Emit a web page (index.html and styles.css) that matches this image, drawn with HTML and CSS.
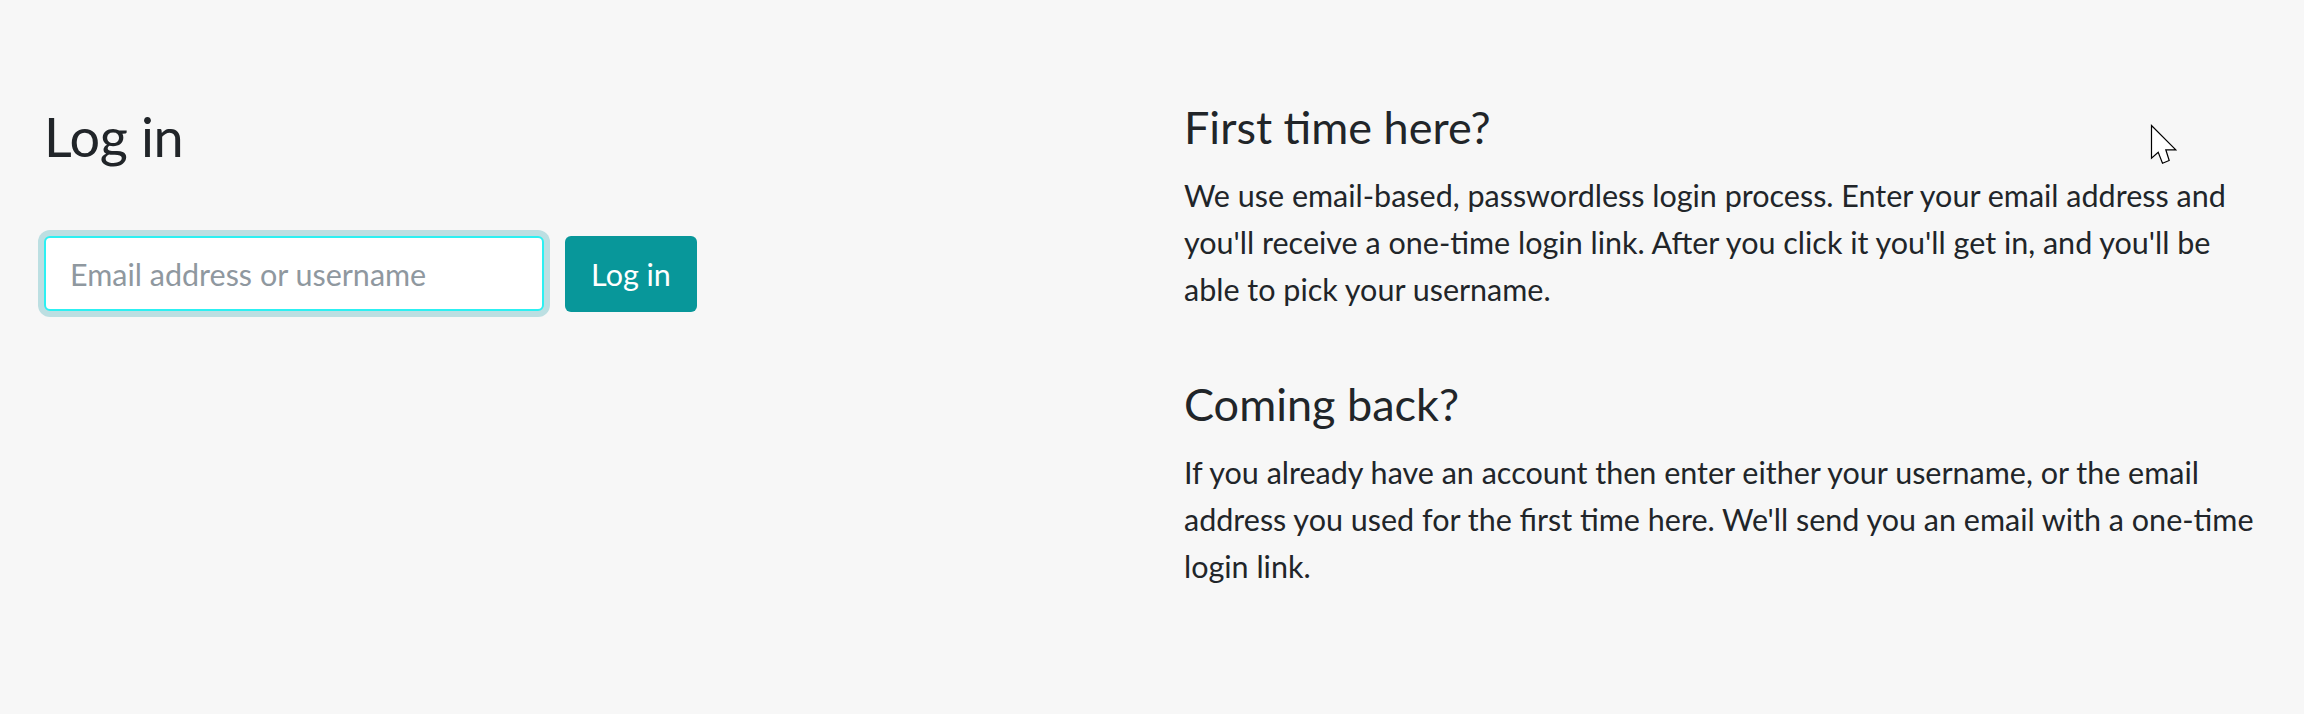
FILE: index.html
```html
<!DOCTYPE html>
<html lang="en">
<head>
<meta charset="utf-8">
<title>Log in</title>
<link rel="stylesheet" href="styles.css">
</head>
<body>
<main class="page">
  <section class="login">
    <h1 class="login-title">Log in</h1>
    <form class="login-form">
      <input class="login-input" type="text" placeholder="Email address or username">
      <button class="login-button" type="button">Log in</button>
    </form>
  </section>
  <section class="info">
    <h2 class="info-title">First time here?</h2>
    <p class="info-text">We use email-based, passwordless login process. Enter your email address and you'll receive a one-time login link. After you click it you'll get in, and you'll be able to pick your username.</p>
    <h2 class="info-title info-title-next">Coming back?</h2>
    <p class="info-text">If you already have an account then enter either your username, or the email address you used for the first time here. We'll send you an email with a one-time login link.</p>
  </section>
</main>
<svg class="cursor" width="28" height="42" viewBox="0 0 28 42" aria-hidden="true">
  <path d="M1.5 1.5 L1.5 34.2 L8.2 28.2 L12.5 39.2 L19.2 36.5 L15.8 25.8 L25.8 25.8 Z" fill="#ffffff" stroke="#000000" stroke-width="1.2" stroke-linejoin="miter"/>
</svg>
</body>
</html>
```
FILE: styles.css
```css
html, body {
  margin: 0;
  padding: 0;
}

body {
  background: #f7f7f7;
  color: #212529;
  font-family: "Lato", "Source Sans Pro", "Noto Sans", sans-serif;
  width: 2304px;
  height: 714px;
  overflow: hidden;
  position: relative;
}

.page {
  display: grid;
  grid-template-columns: 1fr 1080px;
  column-gap: 50px;
  padding: 100px 40px 0 44px;
}

.login-title {
  margin: 0 0 63px;
  font-size: 54px;
  font-weight: 400;
  line-height: 73px;
  letter-spacing: -0.3px;
}

.login-form {
  display: flex;
  align-items: flex-start;
  gap: 21px;
  margin: 0;
}

.login-input {
  box-sizing: border-box;
  width: 500px;
  height: 75px;
  padding: 0 24px;
  border: 2px solid #2cf0f2;
  border-radius: 6px;
  background: #ffffff;
  box-shadow: 0 0 0 6px #bcdfe2;
  outline: none;
  font-family: inherit;
  font-size: 30.5px;
  color: #212529;
}

.login-input::placeholder {
  color: #8f989f;
  opacity: 1;
}

.login-button {
  box-sizing: border-box;
  width: 132px;
  height: 76px;
  padding: 0;
  border: none;
  border-radius: 6px;
  background: #08979a;
  color: #ffffff;
  font-family: inherit;
  font-size: 30.5px;
  cursor: pointer;
}

.info-title {
  margin: 0 0 18px;
  font-size: 45px;
  font-weight: 400;
  line-height: 54px;
}

.info-title-next {
  margin-top: 64px;
}

.info-text {
  margin: 0;
  font-size: 30.5px;
  line-height: 47px;
}

.cursor {
  position: absolute;
  left: 2150px;
  top: 124px;
}
```
